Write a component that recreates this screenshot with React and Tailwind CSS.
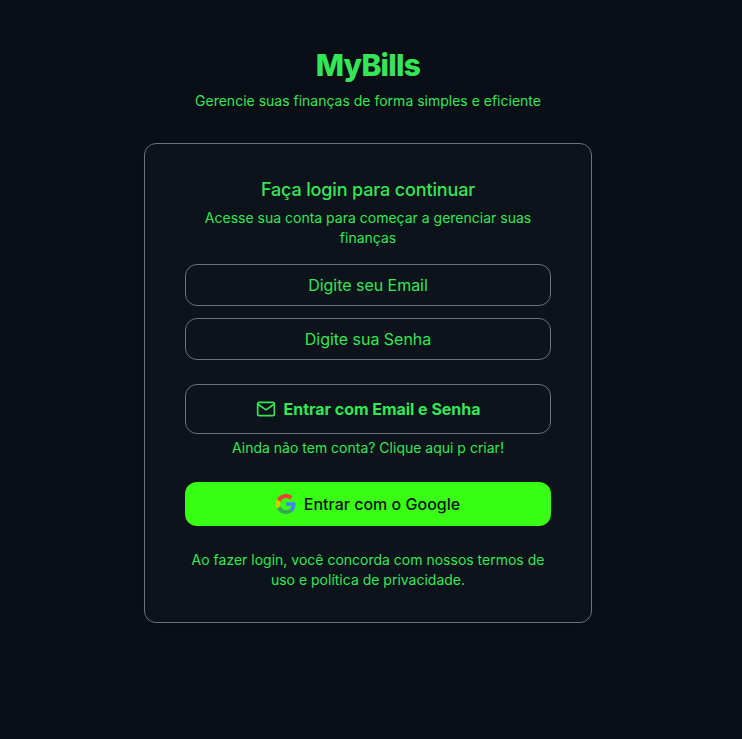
function MailIcon() {
  return (
    <svg
      viewBox="0 0 24 24"
      className="h-5 w-5"
      fill="none"
      stroke="currentColor"
      strokeWidth="2"
      strokeLinecap="round"
      strokeLinejoin="round"
    >
      <path d="M4 4h16c1.1 0 2 .9 2 2v12c0 1.1-.9 2-2 2H4c-1.1 0-2-.9-2-2V6c0-1.1.9-2 2-2z" />
      <polyline points="22,6 12,13 2,6" />
    </svg>
  );
}

function GoogleLogo() {
  return (
    <svg viewBox="0 0 48 48" className="h-5 w-5">
      <path fill="#EA4335" d="M24 9.5c3.54 0 6.71 1.22 9.21 3.6l6.85-6.85C35.9 2.38 30.47 0 24 0 14.62 0 6.51 5.38 2.56 13.22l7.98 6.19C12.43 13.72 17.74 9.5 24 9.5z" />
      <path fill="#4285F4" d="M46.98 24.55c0-1.57-.15-3.09-.38-4.55H24v9.02h12.94c-.58 2.96-2.26 5.48-4.78 7.18l7.73 6c4.51-4.18 7.09-10.36 7.09-17.65z" />
      <path fill="#FBBC05" d="M10.53 28.59c-.48-1.45-.76-2.99-.76-4.59s.27-3.14.76-4.59l-7.98-6.19C.92 16.46 0 20.12 0 24c0 3.88.92 7.54 2.56 10.78l7.97-6.19z" />
      <path fill="#34A853" d="M24 48c6.48 0 11.93-2.13 15.89-5.81l-7.73-6c-2.15 1.45-4.92 2.3-8.16 2.3-6.26 0-11.57-4.22-13.47-9.91l-7.98 6.19C6.51 42.62 14.62 48 24 48z" />
    </svg>
  );
}

const fieldClass =
  "h-[42px] w-full rounded-xl border border-gray-500 bg-transparent text-center text-base tracking-[-0.002em] text-[#33e655] outline-none placeholder:text-[#33e655]";

export default function App() {
  return (
    <main className="flex min-h-screen flex-col items-center bg-[#0a0e16] pt-[47px] pr-1.5 font-['Inter',sans-serif] text-[#33e655]">
      <header className="text-center">
        <h1 className="text-3xl font-extrabold tracking-tight">MyBills</h1>
        <p className="mt-2 text-sm">Gerencie suas finanças de forma simples e eficiente</p>
      </header>
      <section className="mt-8 h-[480px] w-[448px] rounded-xl border border-gray-500 bg-[#0d131a] px-[40px] pt-8 text-center shadow-sm">
        <h2 className="text-lg font-medium tracking-[-0.008em]">Faça login para continuar</h2>
        <p className="mt-1 text-sm">Acesse sua conta para começar a gerenciar suas finanças</p>
        <form className="mt-4 flex flex-col gap-3">
          <input className={fieldClass} placeholder="Digite seu Email" />
          <input className={fieldClass} placeholder="Digite sua Senha" />
          <button type="button" className="mt-3 flex h-[50px] items-center justify-center gap-2 rounded-xl border border-gray-500 font-bold tracking-[-0.002em]">
            <MailIcon />
            Entrar com Email e Senha
          </button>
        </form>
        <p className="mt-1 text-sm">Ainda não tem conta? Clique aqui p criar!</p>
        <button type="button" className="mt-6 flex h-11 w-full items-center justify-center gap-2 rounded-xl bg-[#39ff14] font-medium text-[#0d131a]">
          <GoogleLogo />
          Entrar com o Google
        </button>
        <p className="mt-6 text-sm">Ao fazer login, você concorda com nossos termos de uso e política de privacidade.</p>
      </section>
    </main>
  );
}
